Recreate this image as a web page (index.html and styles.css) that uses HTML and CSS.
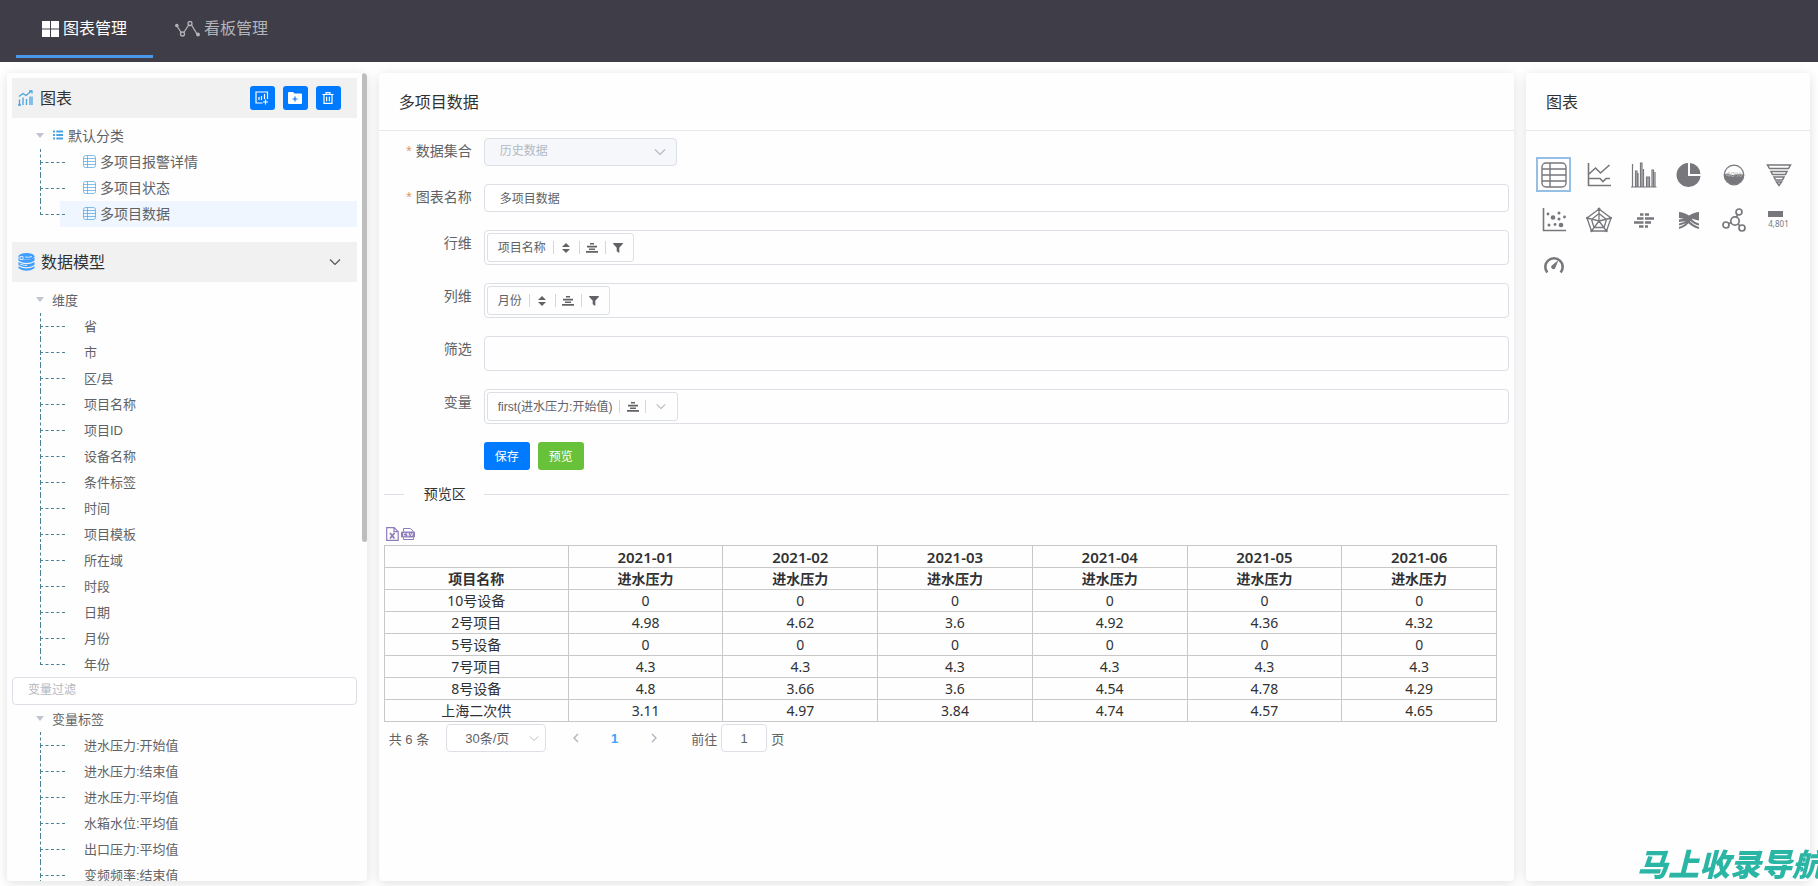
FILE: index.html
```html
<!DOCTYPE html>
<html lang="zh-CN">
<head>
<meta charset="utf-8">
<title>图表管理</title>
<link rel="stylesheet" href="styles.css">
</head>
<body>
<svg class="sprite" aria-hidden="true">
  <symbol id="i-table" viewBox="0 0 26 26"><g fill="none" stroke="currentColor" stroke-width="1.4"><rect x="1" y="1" width="24" height="24" rx="4"/><path d="M1 7h24M1 13h24M1 19h24M9 1v24"/></g></symbol>
  <symbol id="i-list" viewBox="0 0 10 10"><path fill="currentColor" d="M0 .5h2v2H0zM3.300 .5H10v2H3.300zM0 4h2v2H0zM3.300 4H10v2H3.300zM0 7.500h2v2H0zM3.300 7.500H10v2H3.300z"/></symbol>
  <symbol id="i-sort" viewBox="0 0 8 10"><path fill="currentColor" d="M4 0l4 4H0zM0 6h8l-4 4z"/></symbol>
  <symbol id="i-align" viewBox="0 0 12 10"><path fill="currentColor" d="M4 0h4v1.600H4zM1 2.800h10v1.600H1zM3 5.400h6V7H3zM0 8h12v1.700H0z"/></symbol>
  <symbol id="i-filter" viewBox="0 0 10 10"><path fill="currentColor" d="M.3 0h9.400q.5.400 0 1L6.300 4.700V10L3.700 8.200V4.700L.3 1q-.5-.6 0-1z"/></symbol>
  <symbol id="i-down" viewBox="0 0 12 8"><path fill="none" stroke="currentColor" stroke-width="1.200" d="M1 1.500l5 5 5-5"/></symbol>
</svg>

<nav class="topbar">
  <a class="tab tab-active" href="#charts">
    <svg width="17" height="16" viewBox="0 0 17 16"><path fill="currentColor" d="M0 0h8v7.500H0zM9 0h8v7.500H9zM0 8.500h8V16H0zM9 8.500h8V16H9z"/></svg>
    <span>图表管理</span>
  </a>
  <a class="tab" href="#boards">
    <svg width="25" height="16" viewBox="0 0 25 16"><g fill="none" stroke="currentColor" stroke-width="1.300"><path d="M2 5l4.500 7M8.500 12l5.500-8.500M16.500 4l5.500 9"/><circle cx="7.500" cy="13" r="2"/><circle cx="15" cy="2.500" r="2"/></g><circle cx="1.800" cy="4.500" r="1.800" fill="currentColor"/><circle cx="23" cy="13.500" r="1.900" fill="currentColor"/></svg>
    <span>看板管理</span>
  </a>
</nav>

<main class="columns">
  <aside class="side">
    <div class="panel panel-side">
      <header class="bar">
        <svg class="blue" width="16" height="16" viewBox="0 0 16 16"><path fill="none" stroke="currentColor" stroke-width="1.300" d="M1 6.500l4-3 3 2L13.500 1M11 .8h3v2.600M1.500 9.500V15M5 7.500V15M8.500 9V15M12 6.500V15M14 6.500V15M0 15h3"/></svg>
        <h2>图表</h2>
        <div class="bar-actions">
          <button class="square" aria-label="新建图表"><svg width="14" height="14" viewBox="0 0 14 14"><path fill="none" stroke="currentColor" stroke-width="1.200" d="M7.500 12H1V1h11.500v7M4 6v3M6.500 5v4M9.500 3v5M10.500 8.500v5M8 11h5"/></svg></button>
          <button class="square" aria-label="新建分类"><svg width="14" height="12" viewBox="0 0 14 12"><path fill="currentColor" d="M0 1q0-1 1-1h4l1.500 1.500H13q1 0 1 1V11q0 1-1 1H1q-1 0-1-1z"/><path stroke="#007bff" stroke-width="1.200" d="M7 4.500v5M4.500 7h5"/></svg></button>
          <button class="square" aria-label="删除"><svg width="12" height="12" viewBox="0 0 12 12"><path fill="none" stroke="currentColor" stroke-width="1.200" d="M.5 2.500h11M4 2.300V.7h4v1.600M2 2.500v8.900h8V2.500M4.600 4.800v4.500M7.400 4.800v4.500"/></svg></button>
        </div>
      </header>

      <div class="tree tree-charts">
        <div class="node"><i class="caret"></i><svg class="blue" width="10" height="10"><use href="#i-list"/></svg><span>默认分类</span></div>
        <ul>
          <li><span class="leaf"><svg class="blue" width="13" height="13"><use href="#i-table"/></svg>多项目报警详情</span></li>
          <li><span class="leaf"><svg class="blue" width="13" height="13"><use href="#i-table"/></svg>多项目状态</span></li>
          <li><span class="leaf leaf-current"><svg class="blue" width="13" height="13"><use href="#i-table"/></svg>多项目数据</span></li>
        </ul>
      </div>

      <header class="bar">
        <svg width="17" height="18" viewBox="0 0 17 18"><g fill="#409eff"><ellipse cx="8.500" cy="3.300" rx="8" ry="3.300"/><path d="M.5 4.500q8 4.500 16 0v3.200q-8 4.500-16 0zM.5 9q8 4.500 16 0v3q-8 4.500-16 0zM.5 13.200q8 4.500 16 0v2q-8 5-16 0z"/></g><path d="M2 3.500h3v3H2zM7 4q4 .8 7-.5M2 11q5 2 7 1.500" fill="none" stroke="#d5eaff"/></svg>
        <h2>数据模型</h2>
        <button class="fold" aria-label="收起"><svg width="12" height="8"><use href="#i-down"/></svg></button>
      </header>

      <div class="tree">
        <div class="node"><i class="caret"></i><span>维度</span></div>
        <ul>
          <li><span class="leaf">省</span></li>
          <li><span class="leaf">市</span></li>
          <li><span class="leaf">区/县</span></li>
          <li><span class="leaf">项目名称</span></li>
          <li><span class="leaf">项目ID</span></li>
          <li><span class="leaf">设备名称</span></li>
          <li><span class="leaf">条件标签</span></li>
          <li><span class="leaf">时间</span></li>
          <li><span class="leaf">项目模板</span></li>
          <li><span class="leaf">所在域</span></li>
          <li><span class="leaf">时段</span></li>
          <li><span class="leaf">日期</span></li>
          <li><span class="leaf">月份</span></li>
          <li><span class="leaf">年份</span></li>
        </ul>
      </div>
      <input class="input filter" type="text" placeholder="变量过滤" aria-label="变量过滤">
      <div class="tree tree-vars">
        <div class="node"><i class="caret"></i><span>变量标签</span></div>
        <ul>
          <li><span class="leaf">进水压力:开始值</span></li>
          <li><span class="leaf">进水压力:结束值</span></li>
          <li><span class="leaf">进水压力:平均值</span></li>
          <li><span class="leaf">水箱水位:平均值</span></li>
          <li><span class="leaf">出口压力:平均值</span></li>
          <li><span class="leaf">变频频率:结束值</span></li>
        </ul>
      </div>
      <i class="scroll-thumb"></i>
    </div>
  </aside>

  <section class="main">
    <div class="panel">
      <header class="panel-head"><h1>多项目数据</h1></header>
      <form class="form">
        <div class="row">
          <label class="required" for="dataset">数据集合</label>
          <div class="picker picker-dataset"><select id="dataset" class="input" disabled><option>历史数据</option></select><svg width="12" height="8"><use href="#i-down"/></svg></div>
        </div>
        <div class="row">
          <label class="required" for="name">图表名称</label>
          <input id="name" class="input" type="text" value="多项目数据">
        </div>
        <div class="row">
          <span class="label">行维</span>
          <div class="drop"><div class="chip"><span>项目名称</span><button type="button" aria-label="排序"><svg width="8" height="10"><use href="#i-sort"/></svg></button><button type="button" aria-label="对齐"><svg width="12" height="10"><use href="#i-align"/></svg></button><button type="button" aria-label="筛选"><svg width="10" height="10"><use href="#i-filter"/></svg></button></div></div>
        </div>
        <div class="row">
          <span class="label">列维</span>
          <div class="drop"><div class="chip"><span>月份</span><button type="button" aria-label="排序"><svg width="8" height="10"><use href="#i-sort"/></svg></button><button type="button" aria-label="对齐"><svg width="12" height="10"><use href="#i-align"/></svg></button><button type="button" aria-label="筛选"><svg width="10" height="10"><use href="#i-filter"/></svg></button></div></div>
        </div>
        <div class="row">
          <span class="label">筛选</span>
          <div class="drop"></div>
        </div>
        <div class="row">
          <span class="label">变量</span>
          <div class="drop"><div class="chip"><span>first(进水压力:开始值)</span><button type="button" aria-label="对齐"><svg width="12" height="10"><use href="#i-align"/></svg></button><button type="button" class="more" aria-label="更多"><svg width="10" height="7"><use href="#i-down"/></svg></button></div></div>
        </div>
        <div class="row">
          <span class="label"></span>
          <div class="buttons"><button type="button" class="btn btn-save">保存</button><button type="button" class="btn btn-preview">预览</button></div>
        </div>
      </form>

      <div class="divider"><span>预览区</span></div>

      <div class="preview">
        <div class="exports">
          <button aria-label="导出 Excel"><svg width="13" height="14" viewBox="0 0 13 14"><path fill="none" stroke="currentColor" stroke-width="1.200" d="M.7.700h7.500l4 4v8.600H.7zM8 .7v4h4"/><path fill="none" stroke="currentColor" stroke-width="1.800" d="M4 6l4.500 5.500M8.500 6L4 11.500"/></svg></button>
          <button aria-label="导出 CSV"><svg width="14" height="14" viewBox="0 0 14 14"><path fill="none" stroke="currentColor" d="M2.500 4.500v-3h7l3 3M2.500 10.500v2h10v-2"/><rect x="0" y="4.500" width="14" height="6" rx="1" fill="currentColor"/><path fill="none" stroke="#fff" stroke-width=".8" d="M4.500 6.300h-2v2.500h2M8 6.300H6v1.200h2v1.300H6M9.500 6l1.200 3L12 6"/></svg></button>
        </div>
        <table>
          <colgroup><col class="col-name"><col span="6"></colgroup>
          <thead>
            <tr class="months"><th></th><th>2021-01</th><th>2021-02</th><th>2021-03</th><th>2021-04</th><th>2021-05</th><th>2021-06</th></tr>
            <tr><th>项目名称</th><th>进水压力</th><th>进水压力</th><th>进水压力</th><th>进水压力</th><th>进水压力</th><th>进水压力</th></tr>
          </thead>
          <tbody>
            <tr><td>10号设备</td><td>0</td><td>0</td><td>0</td><td>0</td><td>0</td><td>0</td></tr>
            <tr><td>2号项目</td><td>4.98</td><td>4.62</td><td>3.6</td><td>4.92</td><td>4.36</td><td>4.32</td></tr>
            <tr><td>5号设备</td><td>0</td><td>0</td><td>0</td><td>0</td><td>0</td><td>0</td></tr>
            <tr><td>7号项目</td><td>4.3</td><td>4.3</td><td>4.3</td><td>4.3</td><td>4.3</td><td>4.3</td></tr>
            <tr><td>8号设备</td><td>4.8</td><td>3.66</td><td>3.6</td><td>4.54</td><td>4.78</td><td>4.29</td></tr>
            <tr><td>上海二次供</td><td>3.11</td><td>4.97</td><td>3.84</td><td>4.74</td><td>4.57</td><td>4.65</td></tr>
          </tbody>
        </table>
        <div class="pager">
          <span>共 6 条</span>
          <div class="picker picker-size"><select class="input" aria-label="每页条数"><option>30条/页</option></select><svg width="10" height="7"><use href="#i-down"/></svg></div>
          <button class="page-step" aria-label="上一页"><svg width="6" height="10" viewBox="0 0 6 10"><path fill="none" stroke="currentColor" stroke-width="1.400" d="M5 1L1 5l4 4"/></svg></button>
          <button class="page-now">1</button>
          <button class="page-step" aria-label="下一页"><svg width="6" height="10" viewBox="0 0 6 10"><path fill="none" stroke="currentColor" stroke-width="1.400" d="M1 1l4 4-4 4"/></svg></button>
          <label class="goto">前往<input class="input" type="text" value="1">页</label>
        </div>
      </div>
    </div>
  </section>

  <aside class="types">
    <div class="panel">
      <header class="panel-head"><h2>图表</h2></header>
      <div class="type-grid">
        <button class="type type-on" aria-label="表格"><svg width="26" height="26"><use href="#i-table"/></svg></button>
        <button class="type" aria-label="折线图"><svg width="24" height="24" viewBox="0 0 24 24"><path fill="none" stroke="currentColor" stroke-width="1.600" d="M1.500 0v22.500H24M2 11l6.500-6 5 5L22.500 2M2 15.500h11l3 3 3-3h4"/></svg></button>
        <button class="type" aria-label="柱状图"><svg width="26" height="26" viewBox="0 0 26 26"><path fill="none" stroke="currentColor" stroke-width="1.200" d="M1.500 2v23M0 25h25.500M4.500 25V9h1.500v16M7 25V11M9.500 25V1h1.500v24M12.500 25V7M15.500 25V15h3v10M17 25V15M21 25V8h1.500v17M24 25V10"/></svg></button>
        <button class="type" aria-label="饼图"><svg width="26" height="26" viewBox="0 0 26 26"><path fill="currentColor" d="M12 1v13h12.500A12 12 0 1 1 12 1z"/><path fill="currentColor" d="M14 1A11.500 11.500 0 0 1 24.500 12H14z"/></svg></button>
        <button class="type" aria-label="水球图"><svg width="24" height="24" viewBox="0 0 24 24"><circle cx="12" cy="12" r="9.800" fill="none" stroke="currentColor" stroke-width="1.200"/><path fill="currentColor" d="M2.200 12q2-2.500 5-1t6 .5 8.600 0A9.800 9.800 0 1 1 2.200 12z"/><text x="12" y="14" text-anchor="middle" class="water-text">40%</text></svg></button>
        <button class="type" aria-label="漏斗图"><svg width="26" height="24" viewBox="0 0 26 24"><path fill="none" stroke="currentColor" stroke-width="1.500" d="M1.500 2h23l-2 3.500h-19zM5 8.500h16l-1.500 3h-13zM8 14h10l-1.500 3h-7zM10.500 19h5L13 22.500z"/></svg></button>
        <button class="type" aria-label="散点图"><svg width="24" height="24" viewBox="0 0 24 24"><path fill="none" stroke="currentColor" stroke-width="1.600" d="M1.500 0v22.500H24"/><g fill="currentColor"><circle cx="6" cy="6" r="1.400"/><circle cx="11" cy="9.500" r="2.300"/><circle cx="17" cy="5" r="1.500"/><circle cx="17" cy="11" r="1.500"/><circle cx="22.500" cy="9" r="1.400"/><circle cx="7" cy="17" r="1.500"/><circle cx="13" cy="16.500" r="1.400"/><circle cx="19" cy="17" r="2.300"/></g></svg></button>
        <button class="type" aria-label="雷达图"><svg width="26" height="26" viewBox="0 0 26 26"><path fill="none" stroke="currentColor" stroke-width="1.300" d="M13 2l12 9-4.500 13h-15L1 11zM13 6.500l7.500 6-2.500 8H8l-2.500-8zM13 2v12L1 11M13 14l12-3M13 14l7.500 10M13 14L5.500 24"/><g fill="currentColor"><circle cx="13" cy="2" r="1.500"/><circle cx="24.800" cy="11" r="1.200"/><circle cx="1.200" cy="11" r="1.200"/><circle cx="20.500" cy="24" r="1.200"/><circle cx="5.500" cy="24" r="1.200"/></g></svg></button>
        <button class="type" aria-label="条形图"><svg width="20" height="16" viewBox="0 0 20 16"><path stroke="currentColor" stroke-width="2.600" d="M6 2.500h3.500M11 2.500h4M3 6.500h6.500M11 6.500h9M0 10.500h9.500M11 10.500h6M5 14.500h4.500M11 14.500h3"/></svg></button>
        <button class="type" aria-label="桑基图"><svg width="20" height="18" viewBox="0 0 20 18"><path fill="currentColor" d="M0 1q4.500 0 10 3.500Q15.500 1 20 1v8.500q-4-.5-7-2Q9 10 7 10L0 11V8.500L5 7.800 0 7z"/><path fill="none" stroke="currentColor" stroke-width="2" d="M0 17Q7 15 11 9t9-5M0 13.500Q8 12 12 6M8 9q5 6 12 8M11 8q4 4.500 9 5.500"/></svg></button>
        <button class="type" aria-label="关系图"><svg width="24" height="24" viewBox="0 0 24 24"><g fill="none" stroke="currentColor" stroke-width="1.700"><circle cx="13" cy="13" r="4.200"/><circle cx="17" cy="4" r="3"/><circle cx="4" cy="17" r="3"/><circle cx="20" cy="20" r="3"/><path d="M14.500 9l1.200-2.500M9 14.500l-2.300 1.200M16 16l1.800 1.800"/></g></svg></button>
        <button class="type" aria-label="指标卡"><span class="metric"><i></i>4,801</span></button>
        <button class="type" aria-label="仪表盘"><svg width="22" height="22" viewBox="0 0 22 22"><path fill="none" stroke="currentColor" stroke-width="2.600" d="M4.300 18.500A8.700 8.700 0 1 1 17.700 18.500"/><path fill="currentColor" d="M15.500 6l-3 7.500a2.200 2.200 0 1 1-3.400-2.300z"/></svg></button>
      </div>
    </div>
  </aside>
</main>
<div class="watermark">马上收录导航</div>
</body>
</html>
```
FILE: styles.css
```css
* { box-sizing: border-box; }

body {
  margin: 0;
  height: 100vh;
  display: flex;
  flex-direction: column;
  overflow: hidden;
  background: #fff;
  color: #606266;
  font: 14px "Liberation Sans", "Noto Sans CJK SC", sans-serif;
}

h1, h2 { margin: 0; padding-bottom: 2px; font-size: 16px; font-weight: 400; color: #303133; }
button, input, select { font: inherit; color: inherit; }
button { border: 0; padding: 0; background: none; cursor: pointer; }
ul { list-style: none; margin: 0; padding: 0; }
svg { flex: none; display: block; }
.sprite { position: absolute; width: 0; height: 0; }
.blue { color: #4ba3e0; }

/* top navigation */
.topbar {
  flex: none;
  height: 62px;
  display: flex;
  gap: 8px;
  padding: 0 16px;
  background: #3f3e48;
  font-size: 16px;
}
.tab {
  display: flex;
  align-items: center;
  gap: 4px;
  height: 58px;
  padding: 2px 26px 0;
  border-bottom: 3px solid transparent;
  color: #b3b3ba;
  text-decoration: none;
}
.tab span { padding-bottom: 3px; }
.tab + .tab { padding: 2px 14px 0; }
.tab-active { color: #fff; border-color: #4a97ea; }

/* page columns */
.columns {
  flex: 1;
  min-height: 0;
  display: grid;
  grid-template-columns: 5fr 15fr 4fr;
  padding: 11px 0 5px;
}
.side, .main, .types { min-width: 0; min-height: 0; }
.side { padding: 0 12px 0 7px; }
.main { padding-right: 1px; }
.types { padding: 0 8px 0 11px; }
.panel {
  height: 100%;
  overflow: hidden;
  background: #fefefe;
  border-radius: 4px;
  box-shadow: 0 2px 12px rgba(0, 0, 0, .13);
}
.panel-side { position: relative; padding: 5px 10px 0 5px; }
.scroll-thumb {
  position: absolute;
  top: 0;
  right: 0;
  width: 5px;
  height: 58%;
  border-radius: 3px;
  background: #bdbdbd;
}
.panel-head {
  height: 58px;
  display: flex;
  align-items: center;
  padding: 0 20px;
  border-bottom: 1px solid #e6e8ee;
}

/* side panel */
.bar {
  height: 40px;
  display: flex;
  align-items: center;
  gap: 6px;
  padding: 0 16px 0 6px;
  background: #f1f1f1;
}
.bar-actions { margin-left: auto; display: flex; gap: 8px; }
.square {
  width: 25px;
  height: 24px;
  display: flex;
  align-items: center;
  justify-content: center;
  border-radius: 3px;
  background: #007bff;
  color: #fff;
}
.fold { margin-left: auto; color: #555; }
.tree { padding: 5px 0 0 24px; font-size: 13px; }
.tree-charts { padding: 5px 0 15px 24px; font-size: 14px; }
.tree-vars { padding-top: 1px; }
.node { height: 26px; display: flex; align-items: center; gap: 5px; padding-bottom: 2px; }
.node .caret { margin-right: 3px; }
.tree-charts .caret { margin-right: 4px; }
.caret {
  width: 8px;
  border: 4px solid transparent;
  border-top: 5px solid #c0c4cc;
  border-bottom: 0;
}
.tree ul { padding-left: 24px; }
.tree li { position: relative; height: 26px; }
.tree li::before {
  content: "";
  position: absolute;
  left: -20px;
  top: 0;
  width: 24px;
  height: 13px;
  border-left: 1px dashed #4d8198;
  border-bottom: 1px dashed #4d8198;
}
.tree li:not(:last-child)::after,
.tree-vars li::after {
  content: "";
  position: absolute;
  left: -20px;
  top: 13px;
  height: 13px;
  border-left: 1px dashed #4d8198;
}
.leaf {
  height: 26px;
  display: flex;
  align-items: center;
  gap: 4px;
  padding: 0 0 2px 24px;
}
.tree-charts .leaf { padding-left: 23px; }
.leaf-current { background: #eff6ff; }

/* inputs */
.input {
  width: 100%;
  height: 28px;
  padding: 0 15px 2px;
  border: 1px solid #dcdfe6;
  border-radius: 4px;
  background: #fff;
  font-size: 12px;
  appearance: none;
  outline: 0;
}
.input::placeholder { color: #b4b8c0; }
.filter { display: block; }
.picker { position: relative; }
.picker svg { position: absolute; right: 11px; top: 10px; color: #b4b9c2; pointer-events: none; }
.picker-dataset { width: 193px; }
.picker-dataset .input { background: #f5f7fa; color: #b4b9c2; opacity: 1; }

/* form */
.form { padding: 7px 5px 0; display: grid; gap: 18px; }
.row { display: flex; min-height: 28px; }
.row label, .label {
  flex: none;
  width: 100px;
  padding-right: 12px;
  line-height: 26px;
  text-align: right;
}
.required::before { content: "*"; margin-right: 4px; color: #dc9468; }
.drop {
  flex: 1;
  min-height: 35px;
  padding: 2px;
  border: 1px solid #dcdfe6;
  border-radius: 4px;
}
.chip {
  width: max-content;
  height: 29px;
  display: flex;
  align-items: center;
  padding: 0 2px 0 10px;
  border: 1px solid #dcdfe6;
  border-radius: 3px;
  font-size: 12px;
}
.chip span { margin-right: 7px; padding-bottom: 2px; }
.chip button {
  width: 26px;
  height: 13px;
  display: flex;
  align-items: center;
  justify-content: center;
  border-left: 1px solid #d4d7de;
}
.chip .more { width: 30px; color: #8f9299; }
.buttons { display: flex; gap: 8px; }
.btn {
  width: 46px;
  height: 28px;
  padding-bottom: 2px;
  border-radius: 3px;
  color: #fff;
  font-size: 12px;
}
.btn-save { background: #007bff; }
.btn-preview { background: #67c23a; }

/* preview */
.divider {
  display: flex;
  align-items: center;
  margin: 14px 5px 0;
  line-height: 20px;
  color: #303133;
}
.divider::before { content: ""; width: 20px; height: 1px; background: #dcdfe6; }
.divider::after { content: ""; flex: 1; height: 1px; background: #dcdfe6; }
.divider span { padding: 0 18px 0 20px; }
.preview { padding: 23px 17px 0 5px; }
.exports { display: flex; gap: 2px; padding: 0 0 4px 2px; color: #8e7cba; }
table {
  width: 100%;
  table-layout: fixed;
  border-collapse: collapse;
  color: #303133;
  font: 14px "Noto Sans", "Noto Sans CJK SC", sans-serif;
}
.col-name { width: 184px; }
th, td {
  height: 22px;
  padding: 0;
  border: 1px solid #c8c8c8;
  line-height: 20px;
  text-align: center;
}
th { font-weight: 600; }
.months th { font-size: 15px; }
.pager {
  display: flex;
  align-items: center;
  height: 32px;
  padding-left: 5px;
  font-size: 13px;
}
.picker-size { width: 100px; margin: 0 10px 0 17px; }
.picker-size .input { font-size: 13px; padding: 0 18px; }
.picker-size svg { right: 7px; top: 11px; }
.pager button { width: 39px; height: 28px; display: flex; align-items: center; justify-content: center; }
.page-step { color: #b0b4bc; }
.pager .page-now { color: #409eff; font-weight: 700; }
.goto { display: flex; align-items: center; gap: 4px; margin-left: 18px; }
.goto .input { width: 46px; padding: 0; font-size: 13px; text-align: center; }

/* chart types */
.type-grid { display: flex; flex-wrap: wrap; gap: 10px; padding: 26px 0 0 10px; }
.type {
  width: 35px;
  height: 35px;
  display: flex;
  align-items: center;
  justify-content: center;
  color: #77777c;
}
.type-on { border: 2px solid #96bfe8; }
.water-text { font-size: 8px; fill: #bbb; }
.metric { display: grid; gap: 2px; font: 8px "Noto Sans", sans-serif; line-height: 9px; }
.metric i { width: 15px; height: 6px; background: #77777c; }

.watermark {
  position: fixed;
  left: calc(100% - 181px);
  bottom: 1px;
  white-space: nowrap;
  color: #2ab5a5;
  font: italic 900 31px "Noto Sans CJK SC", sans-serif;
  line-height: 44px;
}
```
